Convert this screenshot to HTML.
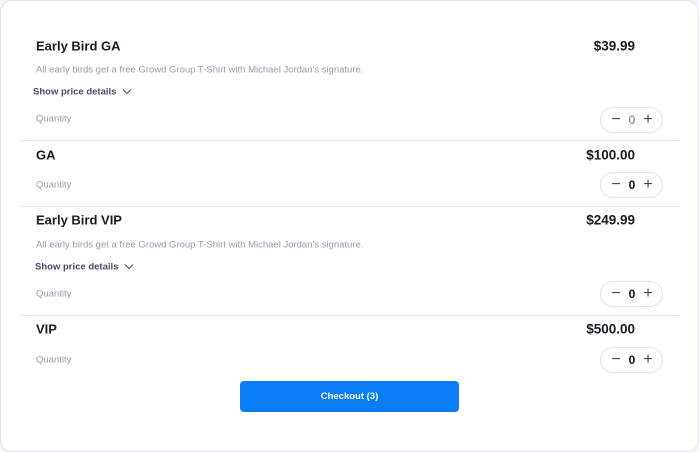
<!DOCTYPE html>
<html><head><meta charset="utf-8"><style>
*{margin:0;padding:0;box-sizing:border-box}
body{width:699px;height:452px;background:#f6f6fb;font-family:"Liberation Sans",sans-serif;position:relative;overflow:hidden}
.card{position:absolute;left:0;top:0;width:699px;height:452px;background:#fff;border:1px solid #e0e0ef;border-radius:12px}
.in{position:absolute;left:-1px;top:-1px;width:699px;height:452px}
.a{position:absolute;white-space:nowrap}
.t{font-size:13px;font-weight:bold;color:#1b1b24;transform:translateY(-50%)}
.p{font-size:13.5px;font-weight:bold;color:#1b1b24;transform:translateY(-50%);right:64px}
.d{font-size:9.5px;color:#9a98ad;transform:translateY(-50%)}
.s{font-size:9.5px;font-weight:bold;color:#4a4870;transform:translateY(-50%)}
.s svg{margin-left:6px;vertical-align:middle}
.q{font-size:9.5px;color:#9a98ad;transform:translateY(-50%)}
.hr{position:absolute;left:20px;width:660px;height:1px;background:#e6e6f2}
.st{position:absolute;left:600px;width:63px;height:26px;border:1px solid #e0e0ef;border-radius:13px;font-size:12px;color:#333}
.st span{position:absolute;top:50%;transform:translate(-50%,-50%)}
.st .g{font-size:16px;font-weight:normal;color:#444}
.btn{position:absolute;left:240px;top:381px;width:219px;height:31px;background:#0a7cf5;border-radius:4px;color:#fff;font-size:9.5px;font-weight:bold;text-align:center;line-height:31px}
</style></head><body><div class="card"><div class="in">
<div class="a t" style="left:36px;top:46px">Early Bird GA</div>
<div class="a p" style="top:46px">$39.99</div>
<div class="a d" style="left:36px;top:70px">All early birds get a free Growd Group T-Shirt with Michael Jordan's signature.</div>
<div class="a s" style="left:33px;top:92px">Show price details<svg width="10" height="6" viewBox="0 0 10 6"><path d="M1 1l4 4 4-4" fill="none" stroke="#4a4870" stroke-width="1"/></svg></div>
<div class="a q" style="left:36px;top:119px">Quantity</div>
<div class="st" style="top:107px"><span class="g" style="left:15px">−</span><span style="left:31px;color:#777">0</span><span class="g" style="left:47px">+</span></div>
<div class="hr" style="top:140px"></div>

<div class="a t" style="left:36px;top:155px">GA</div>
<div class="a p" style="top:155px">$100.00</div>
<div class="a q" style="left:36px;top:185px">Quantity</div>
<div class="st" style="top:172px"><span class="g" style="left:15px">−</span><span style="left:31px;font-weight:bold;color:#111">0</span><span class="g" style="left:47px">+</span></div>
<div class="hr" style="top:206px"></div>

<div class="a t" style="left:36px;top:220px">Early Bird VIP</div>
<div class="a p" style="top:220px">$249.99</div>
<div class="a d" style="left:36px;top:245px">All early birds get a free Growd Group T-Shirt with Michael Jordan's signature.</div>
<div class="a s" style="left:35px;top:267px">Show price details<svg width="10" height="6" viewBox="0 0 10 6"><path d="M1 1l4 4 4-4" fill="none" stroke="#4a4870" stroke-width="1"/></svg></div>
<div class="a q" style="left:36px;top:294px">Quantity</div>
<div class="st" style="top:281px"><span class="g" style="left:15px">−</span><span style="left:31px;font-weight:bold;color:#111">0</span><span class="g" style="left:47px">+</span></div>
<div class="hr" style="top:315px"></div>

<div class="a t" style="left:36px;top:329px">VIP</div>
<div class="a p" style="top:329px">$500.00</div>
<div class="a q" style="left:36px;top:360px">Quantity</div>
<div class="st" style="top:347px"><span class="g" style="left:15px">−</span><span style="left:31px;font-weight:bold;color:#111">0</span><span class="g" style="left:47px">+</span></div>

<div class="btn">Checkout (3)</div>
</div></div></body></html>
